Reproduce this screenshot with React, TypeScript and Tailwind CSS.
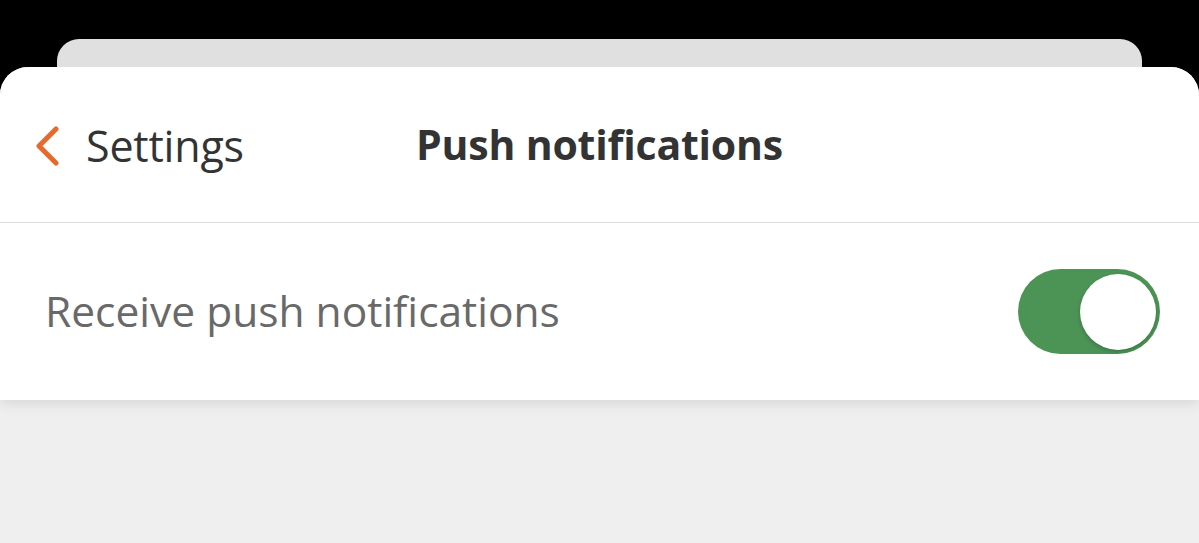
import React, { useState } from "react";

const App = () => {
  const [enabled, setEnabled] = useState(true);

  return (
    <div
      className="relative h-[543px] w-[1199px] overflow-hidden bg-black"
      style={{ fontFamily: '"Open Sans", "Noto Sans", sans-serif' }}
    >
      {/* card stacked behind */}
      <div className="mx-[57px] mt-[39px] h-[60px] rounded-t-[22px] bg-[#e0e0e0]" />

      {/* sheet */}
      <div className="absolute inset-x-0 top-[67px] bottom-0 flex flex-col overflow-hidden rounded-t-[28px] bg-[#efefef]">
        <div className="relative z-10 bg-white shadow-[0_2px_14px_rgba(0,0,0,0.12)]">
          {/* Header */}
          <div className="relative flex h-[156px] items-center border-b border-[#dcdcdc]">
            <button type="button" className="flex items-center gap-[26px] pl-[34px] pt-[2px]">
              <svg width="26" height="40" viewBox="0 0 26 40" fill="none">
                <path
                  d="M22 3 L5 20 L22 37"
                  stroke="#e8692d"
                  strokeWidth="5"
                  strokeLinecap="round"
                  strokeLinejoin="round"
                />
              </svg>
              <span className="text-[43px] leading-none tracking-[-0.2px] text-[#333333]">
                Settings
              </span>
            </button>
            <h1 className="absolute left-1/2 -translate-x-1/2 text-[41px] font-bold leading-none tracking-[-0.2px] text-[#333333]">
              Push notifications
            </h1>
          </div>

          {/* Row */}
          <div className="flex h-[177px] items-center justify-between pl-[45px] pr-[39px]">
            <span className="text-[42.5px] leading-none text-[#696969]">
              Receive push notifications
            </span>
            <button
              type="button"
              onClick={() => setEnabled(!enabled)}
              className={`flex h-[85px] w-[142px] items-center rounded-full p-[4px] ${
                enabled ? "justify-end bg-[#4c9356]" : "justify-start bg-[#d6d6d6]"
              }`}
            >
              <span className="h-[76px] w-[76px] rounded-full bg-white shadow-[0_2px_4px_rgba(0,0,0,0.2)]" />
            </button>
          </div>
        </div>
      </div>
    </div>
  );
};

export default App;
